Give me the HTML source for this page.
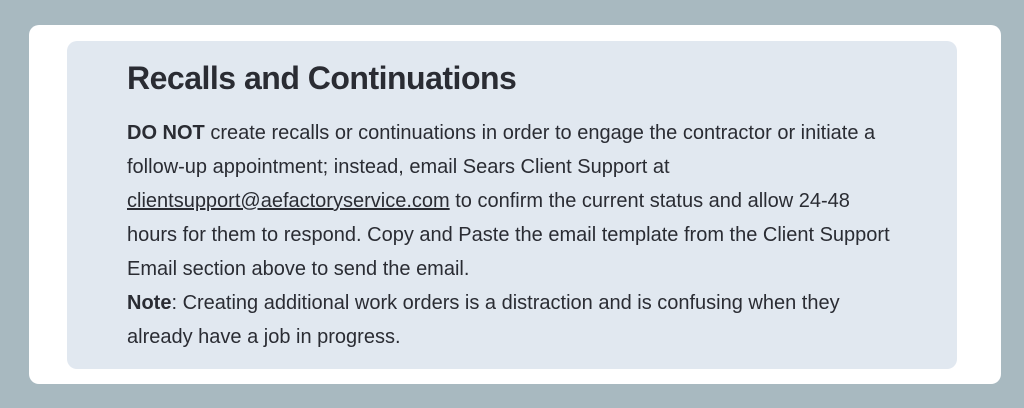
<!DOCTYPE html>
<html><head><meta charset="utf-8"><style>
html,body{margin:0;padding:0;}
body{width:1024px;height:408px;background:#a8b9c0;position:relative;overflow:hidden;font-family:"Liberation Sans",sans-serif;color:#2a2c33;}
.card{position:absolute;left:29px;top:25px;width:972px;height:359px;background:#fff;border-radius:10px;}
.panel{position:absolute;left:67px;top:41px;width:890px;height:328px;background:#e1e8f0;border-radius:10px;}
h1{position:absolute;left:127px;top:59px;margin:0;font-size:32px;line-height:38px;font-weight:bold;white-space:nowrap;letter-spacing:-0.5px;}
.t{position:absolute;left:127px;top:116px;font-size:20px;line-height:34px;white-space:nowrap;}
a{color:#2a2c33;text-decoration:underline;}
</style></head><body>
<div class="card"></div>
<div class="panel"></div>
<h1>Recalls and Continuations</h1>
<div class="t">
<b>DO NOT</b> create recalls or continuations in order to engage the contractor or initiate a<br>
follow-up appointment; instead, email Sears Client Support at<br>
<a>clientsupport@aefactoryservice.com</a> to confirm the current status and allow 24-48<br>
hours for them to respond. Copy and Paste the email template from the Client Support<br>
Email section above to send the email.<br>
<b>Note</b>: Creating additional work orders is a distraction and is confusing when they<br>
already have a job in progress.
</div>
</body></html>
